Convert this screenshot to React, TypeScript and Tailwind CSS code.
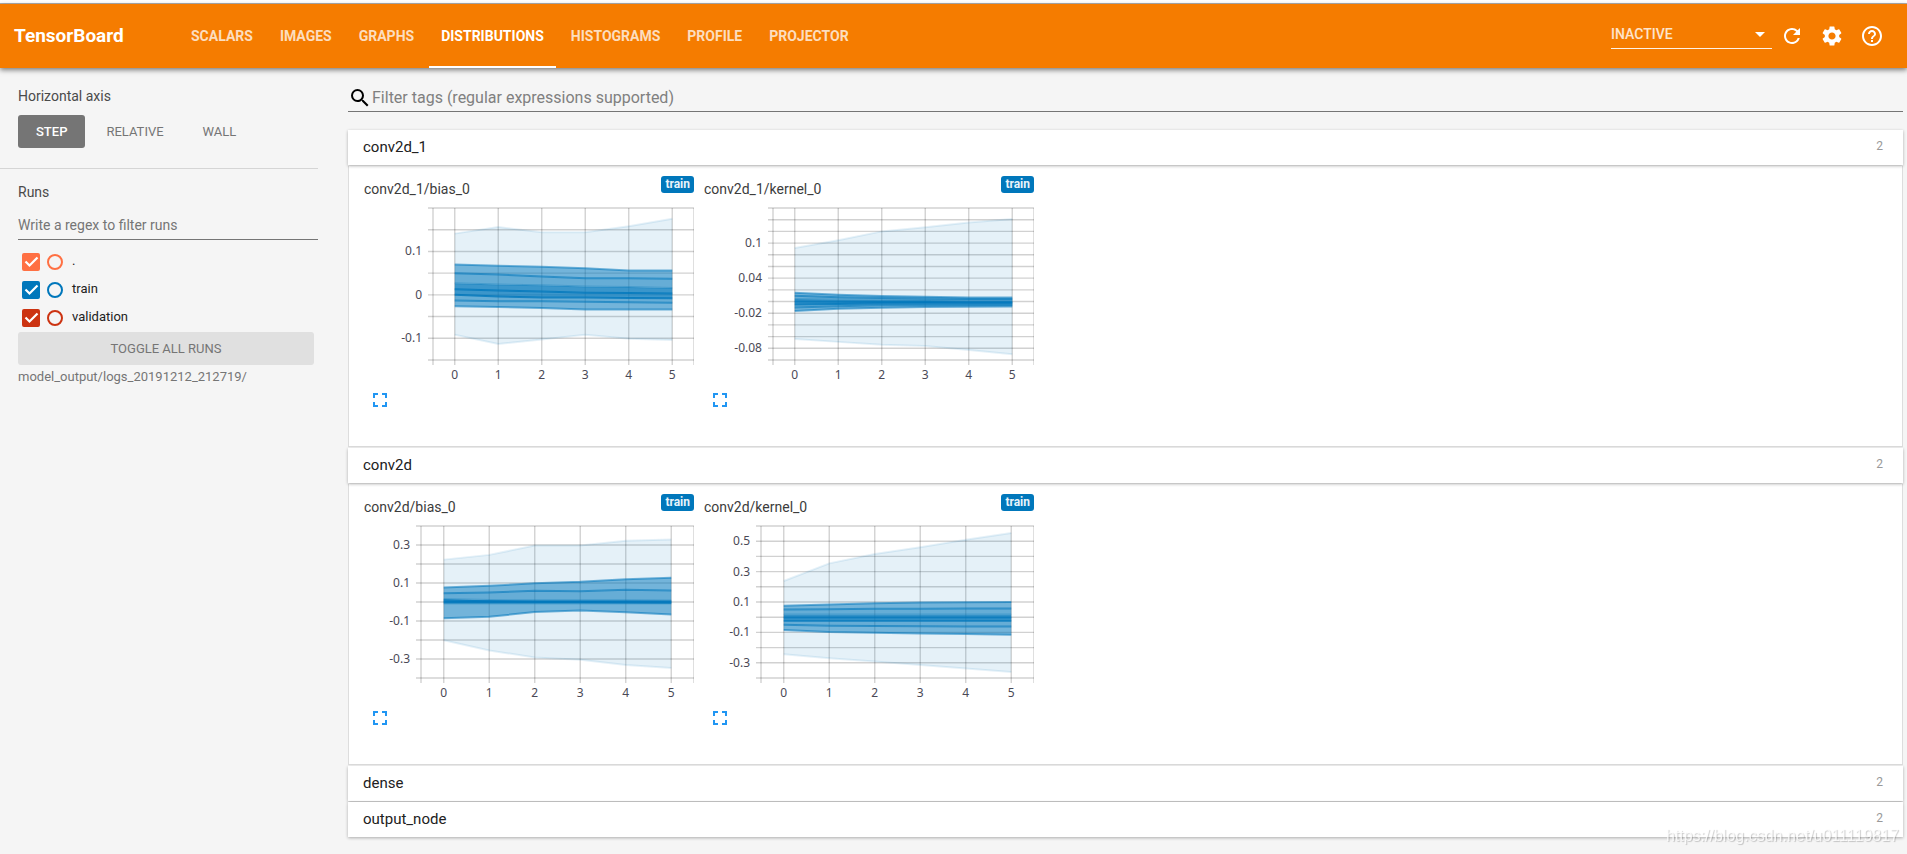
import React, { useState } from 'react';
import { MdArrowDropDown, MdFullscreen, MdHelpOutline, MdRefresh, MdSearch, MdSettings } from 'react-icons/md';

interface ChartSpec {
  tag: string;
  min: number;
  max: number;
  step: number;
  labels: number[];
  left: number; // width taken by the y axis labels
  bands: number[][]; // one row per quantile, highest first
}

interface Category {
  name: string;
  count: number;
  charts?: ChartSpec[];
}

const TABS = ['Scalars', 'Images', 'Graphs', 'Distributions', 'Histograms', 'Profile', 'Projector'];

const RUNS = [
  { name: '.', box: 'bg-[#ff7043] border-[#ff7043]', ring: 'border-[#ff7043]' },
  { name: 'train', box: 'bg-[#0077bb] border-[#0077bb]', ring: 'border-[#0077bb]' },
  { name: 'validation', box: 'bg-[#cc3311] border-[#cc3311]', ring: 'border-[#cc3311]' },
];

const CATEGORIES: Category[] = [
  {
    name: 'conv2d_1',
    count: 2,
    charts: [
      {
        tag: 'conv2d_1/bias_0',
        min: -0.15,
        max: 0.2,
        step: 0.05,
        labels: [0.1, 0, -0.1],
        left: 69,
        bands: [
          [0.141, 0.156, 0.144, 0.144, 0.158, 0.175],
          [0.07, 0.067, 0.065, 0.061, 0.056, 0.056],
          [0.05, 0.047, 0.042, 0.038, 0.038, 0.037],
          [0.027, 0.024, 0.022, 0.019, 0.018, 0.016],
          [0.013, 0.01, 0.008, 0.005, 0.004, 0.003],
          [0, -0.004, -0.006, -0.006, -0.007, -0.008],
          [-0.013, -0.015, -0.015, -0.016, -0.017, -0.018],
          [-0.026, -0.028, -0.03, -0.034, -0.034, -0.034],
          [-0.092, -0.113, -0.103, -0.092, -0.101, -0.104],
        ],
      },
      {
        tag: 'conv2d_1/kernel_0',
        min: -0.1,
        max: 0.16,
        step: 0.02,
        labels: [0.1, 0.04, -0.02, -0.08],
        left: 69,
        bands: [
          [0.0915, 0.105, 0.12, 0.127, 0.135, 0.141],
          [0.015, 0.0115, 0.0095, 0.008, 0.007, 0.007],
          [0.01, 0.0075, 0.006, 0.005, 0.0045, 0.0045],
          [0.0045, 0.0035, 0.003, 0.0025, 0.002, 0.002],
          [0, -0.0005, -0.001, -0.001, -0.0012, -0.0012],
          [-0.005, -0.004, -0.0035, -0.003, -0.003, -0.003],
          [-0.01, -0.008, -0.0065, -0.006, -0.006, -0.006],
          [-0.016, -0.0125, -0.0105, -0.0095, -0.009, -0.0085],
          [-0.064, -0.069, -0.074, -0.076, -0.083, -0.09],
        ],
      },
    ],
  },
  {
    name: 'conv2d',
    count: 2,
    charts: [
      {
        tag: 'conv2d/bias_0',
        min: -0.4,
        max: 0.4,
        step: 0.1,
        labels: [0.3, 0.1, -0.1, -0.3],
        left: 57,
        bands: [
          [0.223, 0.248, 0.297, 0.297, 0.322, 0.329],
          [0.076, 0.085, 0.099, 0.106, 0.12, 0.127],
          [0.046, 0.05, 0.059, 0.057, 0.064, 0.06],
          [0.016, 0.01, 0.009, 0.009, 0.009, 0.008],
          [0.008, 0.004, 0.003, 0.003, 0.003, 0.002],
          [0, 0, 0, 0, -0.001, -0.002],
          [-0.006, -0.006, -0.006, -0.006, -0.006, -0.006],
          [-0.085, -0.078, -0.053, -0.045, -0.054, -0.066],
          [-0.201, -0.255, -0.292, -0.304, -0.332, -0.348],
        ],
      },
      {
        tag: 'conv2d/kernel_0',
        min: -0.4,
        max: 0.6,
        step: 0.1,
        labels: [0.5, 0.3, 0.1, -0.1, -0.3],
        left: 57,
        bands: [
          [0.238, 0.354, 0.416, 0.46, 0.51, 0.554],
          [0.076, 0.083, 0.091, 0.096, 0.098, 0.1],
          [0.05, 0.053, 0.055, 0.056, 0.058, 0.058],
          [0.018, 0.018, 0.018, 0.018, 0.018, 0.018],
          [-0.002, -0.002, -0.002, -0.002, -0.002, -0.002],
          [-0.024, -0.024, -0.024, -0.024, -0.024, -0.024],
          [-0.05, -0.056, -0.058, -0.06, -0.062, -0.062],
          [-0.085, -0.097, -0.102, -0.108, -0.111, -0.115],
          [-0.244, -0.27, -0.292, -0.314, -0.338, -0.36],
        ],
      },
    ],
  },
  { name: 'dense', count: 2 },
  { name: 'output_node', count: 2 },
];

const CHART_W = 330;
const PLOT_TOP = 8;
const PLOT_BOTTOM = 160;
const AREA_OPACITY = [0.1, 0.55, 0.6, 0.77, 0.77, 0.6, 0.55, 0.1];
const LINE_OPACITY = [0.1, 0.55, 0.6, 0.3, 0.8, 0.8, 0.6, 0.55, 0.1];

const DistributionPlot: React.FC<{ spec: ChartSpec }> = ({ spec }) => {
  const { min, max, step, left, labels, bands } = spec;
  const sx = (v: number) => left + ((v + 0.5) / 6) * (CHART_W - left);
  const sy = (v: number) => PLOT_TOP + ((max - v) / (max - min)) * (PLOT_BOTTOM - PLOT_TOP);
  const points = (row: number[]) => row.map((v, i) => `${sx(i)},${sy(v)}`);

  const rows = Math.round((max - min) / step);
  const steps = [0, 1, 2, 3, 4, 5];

  return (
    <svg width={CHART_W} height={184} className="block" role="img" aria-label={`${spec.tag} distribution`}>
      {/* grid */}
      <g stroke="#000" strokeOpacity={0.18} strokeWidth={1.4}>
        {Array.from({ length: rows + 1 }, (_, i) => {
          const y = sy(max - i * step);
          return <line key={i} x1={left - 5} x2={CHART_W} y1={y} y2={y} />;
        })}
        {steps.map(s => (
          <line key={s} x1={sx(s)} x2={sx(s)} y1={PLOT_TOP} y2={PLOT_BOTTOM + 5} />
        ))}
        <line x1={left} x2={left} y1={PLOT_TOP} y2={PLOT_BOTTOM + 5} />
        <line x1={CHART_W} x2={CHART_W} y1={PLOT_TOP} y2={PLOT_BOTTOM + 5} />
      </g>

      {bands.slice(0, -1).map((row, i) => (
        <polygon
          key={`area-${i}`}
          points={[...points(row), ...points(bands[i + 1]).reverse()].join(' ')}
          fill="#0077bb"
          fillOpacity={AREA_OPACITY[i]}
        />
      ))}
      {bands.map((row, i) => (
        <polyline
          key={`line-${i}`}
          points={points(row).join(' ')}
          fill="none"
          stroke="#0077bb"
          strokeWidth={2}
          strokeOpacity={LINE_OPACITY[i]}
        />
      ))}

      <g className="font-['Noto_Sans',sans-serif] text-[12px]" fill="#4a4956">
        {labels.map(v => (
          <text key={v} x={left - 11} y={sy(v) + 4} textAnchor="end">{v}</text>
        ))}
        {steps.map(s => (
          <text key={s} x={sx(s)} y={PLOT_BOTTOM + 19} textAnchor="middle">{s}</text>
        ))}
      </g>
    </svg>
  );
};

const ChartCard: React.FC<{ spec: ChartSpec }> = ({ spec }) => (
  <div className="w-[330px]">
    <div className="flex h-6 items-start justify-between">
      <h3 className="pt-[5px] text-[14px] leading-4 text-[#3c3c3c]">{spec.tag}</h3>
      <span className="rounded-[3px] bg-[#0077bb] px-1 text-[12px] leading-[17px] font-bold text-[#e8f3fa]">train</span>
    </div>
    <DistributionPlot spec={spec} />
    <button aria-label="Toggle full screen" className="ml-1 flex h-8 w-6 items-center justify-center text-[#2196f3]">
      <MdFullscreen size={24} />
    </button>
  </div>
);

const CategoryPane: React.FC<{ category: Category }> = ({ category }) => {
  const [open, setOpen] = useState(!!category.charts);

  return (
    <section>
      <button
        onClick={() => setOpen(!open)}
        className="relative mb-px flex h-[35px] w-full items-center justify-between bg-white pr-5 pl-[15px] shadow-[0_1px_3px_rgba(0,0,0,0.3)]"
      >
        <span className="text-[15px] text-[#212121]">{category.name}</span>
        <span className="pb-1 text-[12px] text-[#999]">{category.count}</span>
      </button>
      {open && category.charts && (
        <div className="mb-px flex h-[281px] flex-wrap gap-[10px] border border-t-0 border-[#ddd] bg-white pt-2.5 pl-[15px]">
          {category.charts.map(c => <ChartCard key={c.tag} spec={c} />)}
        </div>
      )}
    </section>
  );
};

const Header = () => (
  <header className="relative z-10 flex h-16 items-center bg-[#f57c00] pr-[15px] pl-3.5 text-white shadow-[0_2px_5px_rgba(0,0,0,0.5)]">
    <h1 className="w-[165px] text-[19px] font-bold">TensorBoard</h1>
    <nav className="flex h-full flex-1 gap-[3px]">
      {TABS.map(tab => (
        <a
          key={tab}
          href={`#${tab.toLowerCase()}`}
          className={`flex h-full items-center border-b-2 px-3 pt-0.5 text-[14px] font-bold uppercase ${tab === 'Distributions' ? 'border-white' : 'border-transparent text-white/75'}`}
        >
          {tab}
        </a>
      ))}
    </nav>
    <div className="relative mb-1 w-[161px] border-b border-white/90">
      <select aria-label="Inactive dashboards" className="h-7 w-full appearance-none bg-transparent pt-0.5 text-[14px] font-medium text-white/80 uppercase outline-none">
        <option>Inactive</option>
      </select>
      <MdArrowDropDown size={24} className="pointer-events-none absolute top-0.5 right-0" />
    </div>
    <button aria-label="Reload" className="p-2"><MdRefresh size={24} /></button>
    <button aria-label="Settings" className="p-2"><MdSettings size={24} /></button>
    <a href="#help" aria-label="Help" className="p-2"><MdHelpOutline size={24} /></a>
  </header>
);

const Sidebar = () => {
  const [axis, setAxis] = useState('step');
  const [enabled, setEnabled] = useState(RUNS.map(() => true));

  return (
    <aside className="w-[318px] shrink-0">
      <div className="border-b border-[#d5d5d5] pt-[18px] pb-5 pl-[18px]">
        <h2 className="text-[14px] leading-5 text-[#4a4a4a]">Horizontal axis</h2>
        <div className="mt-[9px] flex gap-[3px]">
          {['step', 'relative', 'wall'].map(a => (
            <button
              key={a}
              onClick={() => setAxis(a)}
              className={`h-[33px] rounded-[3px] px-[18px] text-[13px] uppercase ${axis === a ? 'bg-[#757575] font-medium text-white' : 'text-[#757575]'}`}
            >
              {a}
            </button>
          ))}
        </div>
      </div>

      <div className="pt-[13px] pl-[18px]">
        <h2 className="text-[14px] leading-5 text-[#4a4a4a]">Runs</h2>
        <input
          type="text"
          aria-label="Filter runs"
          placeholder="Write a regex to filter runs"
          className="mt-2.5 block h-[28px] w-full border-b border-[#757575] bg-transparent pb-0.5 text-[14px] outline-none placeholder:text-[#757575]"
        />
        <div className="mt-2 pl-1">
          {RUNS.map((run, i) => (
            <label key={run.name} className="flex h-7 items-center text-[13px] text-[#212121]">
              <span className="relative h-[18px] w-[18px]">
                <input
                  type="checkbox"
                  checked={enabled[i]}
                  onChange={() => setEnabled(prev => prev.map((e, j) => (j === i ? !e : e)))}
                  className={`block h-[18px] w-[18px] appearance-none rounded-[2px] border-2 ${run.box}`}
                />
                {enabled[i] && (
                  <svg viewBox="0 0 18 18" className="pointer-events-none absolute inset-0 h-[18px] w-[18px]">
                    <path d="M3.5 8.5 L7.5 12.5 L15.5 4.5" fill="none" stroke="#fff" strokeWidth={2.2} />
                  </svg>
                )}
              </span>
              <span className={`mr-[9px] ml-[7px] h-4 w-4 rounded-full border-2 ${run.ring}`} />
              <span className="pb-0.5">{run.name}</span>
            </label>
          ))}
        </div>
        <button className="block h-[33px] w-[296px] rounded-[3px] bg-[#e0e0e0] text-[13px] text-[#757575] uppercase">
          Toggle all runs
        </button>
        <p className="mt-0.5 text-[13px] leading-5 text-[#757575]">model_output/logs_20191212_212719/</p>
      </div>
    </aside>
  );
};

export default function App() {
  return (
    <div className="flex min-h-screen flex-col bg-[#f5f5f5] font-[Roboto,sans-serif]">
      <div className="h-1 border-b border-[#b0b0b0] bg-white" />
      <Header />
      <div className="flex flex-1">
        <Sidebar />
        <main className="min-w-0 flex-1 pr-1 pl-[30px]">
          <label className="mb-[18px] flex h-11 items-center border-b border-[#757575] pt-4">
            <MdSearch size={24} className="shrink-0" />
            <input
              type="text"
              aria-label="Filter tags"
              placeholder="Filter tags (regular expressions supported)"
              className="w-full bg-transparent text-[16px] outline-none placeholder:text-[#808080]"
            />
          </label>
          {CATEGORIES.map(c => <CategoryPane key={c.name} category={c} />)}
        </main>
      </div>
      <div className="fixed right-2 bottom-[6px] font-['Liberation_Sans',sans-serif] text-[16px] leading-6 text-white/80 [text-shadow:1px_1px_1px_rgba(0,0,0,0.2)]">
        https://blog.csdn.net/u011119817
      </div>
    </div>
  );
}
